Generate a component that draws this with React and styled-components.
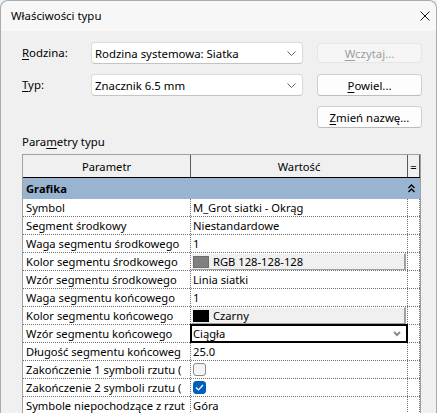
import React from "react";
import styled, { createGlobalStyle } from "styled-components";

const GlobalStyle = createGlobalStyle`
  html, body { margin: 0; padding: 0; background: #f0f0f0; }
  body { font-family: "Noto Sans", "Open Sans", sans-serif; }
  * { box-sizing: border-box; }
`;

const COLS = "168px 217px 12px";

const Window = styled.div`
  width: 437px;
  height: 413px;
  overflow: hidden;
  background: #f0f0f0;
  border: 1px solid #ababab;
  border-bottom: none;
  border-radius: 8px 8px 0 0;
  display: flex;
  flex-direction: column;
  font-family: "Noto Sans", "Open Sans", sans-serif;
  font-size: 11.4px;
  color: #000;
`;

const TitleBar = styled.div`
  height: 30px;
  flex: none;
  display: flex;
  align-items: center;
  justify-content: space-between;
  padding: 0 6px 0 10px;
  background: #f7f7f7;
  border-radius: 8px 8px 0 0;
`;

const Title = styled.span`
  line-height: 16px;
`;

const Body = styled.div`
  flex: 1;
  display: flex;
  flex-direction: column;
  padding: 11px 0 0 21px;
  min-height: 0;
`;

const FormGrid = styled.div`
  display: grid;
  grid-template-columns: 55px 212px 105px;
  grid-template-rows: 22px 22px 22px;
  column-gap: 14px;
  row-gap: 10px;
  align-items: center;
`;

const Label = styled.span`
  line-height: 16px;
  white-space: nowrap;
`;

const Key = styled.span`
  text-decoration: underline;
  text-underline-offset: 2px;
`;

const Combo = styled.div`
  height: 22px;
  background: #fff;
  border: 1px solid #dadada;
  border-bottom-color: #c4c4c4;
  border-radius: 4px;
  display: flex;
  align-items: center;
  justify-content: space-between;
  padding: 0 6px 0 3px;
  white-space: nowrap;
`;

const Button = styled.div`
  grid-column: 3;
  height: ${(p) => (p.disabled ? "20px" : "22px")};
  background: ${(p) => (p.disabled ? "#f5f5f5" : "#fdfdfd")};
  color: ${(p) => (p.disabled ? "#9e9e9e" : "#000")};
  border: 1px solid ${(p) => (p.disabled ? "#e6e6e6" : "#d0d0d0")};
  border-bottom-color: ${(p) => (p.disabled ? "#e6e6e6" : "#bcbcbc")};
  border-radius: 4px;
  display: flex;
  align-items: center;
  justify-content: center;
  white-space: nowrap;
`;

const SectionLabel = styled.div`
  margin-top: 6px;
  line-height: 16px;
`;

const Table = styled.div`
  margin-top: 4px;
  width: 399px;
  flex: 1;
  background: #fff;
  border: 1px solid #a0a0a0;
  border-bottom: none;
  display: flex;
  flex-direction: column;
  font-size: 11.2px;
`;

const HeaderRow = styled.div`
  display: grid;
  grid-template-columns: ${COLS};
  height: 23px;
  flex: none;
  background: #f0f0f0;
  border-bottom: 1px solid #000;
`;

const HeaderCell = styled.div`
  display: flex;
  align-items: center;
  justify-content: center;
  border-right: 1px solid #5a5a5a;
`;

const GroupRow = styled.div`
  height: 21px;
  flex: none;
  background: #99b4d1;
  display: flex;
  align-items: center;
  justify-content: space-between;
  padding: 0 5px 0 3px;
  font-weight: 700;
`;

const DataRow = styled.div`
  display: grid;
  grid-template-columns: ${COLS};
  height: 18px;
  flex: none;
  border-bottom: 1px dotted #6f6f6f;
`;

const Cell = styled.div`
  border-right: 1px dotted #6f6f6f;
  padding-left: ${(p) => (p.$pad != null ? p.$pad : 3)}px;
  overflow: visible;
  white-space: nowrap;
  display: flex;
  align-items: center;
  line-height: 17px;
  min-width: 0;
`;

const ClipText = styled.span`
  overflow: hidden;
  display: block;
  width: 100%;
`;

const ColorButton = styled.div`
  flex: 1;
  height: 17px;
  margin-right: 1px;
  background: #f0f0f0;
  border-top: 1px solid #fff;
  border-left: 1px solid #fff;
  border-right: 2px solid #a0a0a0;
  border-bottom: 1px solid #a0a0a0;
  display: flex;
  align-items: center;
  padding-left: 1px;
  gap: 4px;
`;

const Swatch = styled.span`
  width: 16px;
  height: 12px;
  background: ${(p) => p.$color};
  border: 1px solid ${(p) => (p.$color === "#000000" ? "#000" : "#6e6e6e")};
  flex: none;
`;

const Select = styled.div`
  flex: 1;
  height: 17px;
  background: #fff;
  box-shadow: 0 0 0 1px #000, inset 0 0 0 1px #000;
  display: flex;
  align-items: center;
  justify-content: space-between;
  padding: 0 6px 0 2px;
`;

const CheckBox = styled.span`
  width: 13px;
  height: 13px;
  margin-left: 2px;
  border-radius: 3px;
  background: ${(p) => (p.$checked ? "#005fb8" : "#f4f4f4")};
  border: 1px solid ${(p) => (p.$checked ? "#005fb8" : "#8a8a8a")};
  display: flex;
  align-items: center;
  justify-content: center;
`;

const CloseIcon = () => (
  <svg width="10" height="10" viewBox="0 0 10 10">
    <path d="M0.5 0.5 L9.5 9.5 M9.5 0.5 L0.5 9.5" stroke="#1a1a1a" strokeWidth="1" fill="none" />
  </svg>
);

const ChevronDown = () => (
  <svg width="9" height="5" viewBox="0 0 9 5">
    <path d="M0.5 0.5 L4.5 4.5 L8.5 0.5" stroke="#606060" strokeWidth="1" fill="none" />
  </svg>
);

const SmallChevron = () => (
  <svg width="8" height="6" viewBox="0 0 8 6">
    <path d="M1 1 L4 4 L7 1" stroke="#8c8c8c" strokeWidth="2" fill="none" />
  </svg>
);

const DoubleUp = () => (
  <svg width="7" height="9" viewBox="0 0 7 9">
    <path d="M0.5 4 L3.5 1 L6.5 4 M0.5 8 L3.5 5 L6.5 8" stroke="#000" strokeWidth="1.3" fill="none" />
  </svg>
);

const CheckMark = () => (
  <svg width="9" height="7" viewBox="0 0 9 7">
    <path d="M1 3.5 L3.5 6 L8 1" stroke="#fff" strokeWidth="1.2" fill="none" />
  </svg>
);

const rows = [
  { name: "Symbol", value: "M_Grot siatki - Okrąg" },
  { name: "Segment środkowy", value: "Niestandardowe" },
  { name: "Waga segmentu środkowego", value: "1" },
  { name: "Kolor segmentu środkowego", kind: "color", color: "#808080", value: "RGB 128-128-128" },
  { name: "Wzór segmentu środkowego", value: "Linia siatki" },
  { name: "Waga segmentu końcowego", value: "1" },
  { name: "Kolor segmentu końcowego", kind: "color", color: "#000000", value: "Czarny" },
  { name: "Wzór segmentu końcowego", kind: "select", value: "Ciągła" },
  { name: "Długość segmentu końcoweg", value: "25.0" },
  { name: "Zakończenie 1 symboli rzutu (", kind: "check", checked: false },
  { name: "Zakończenie 2 symboli rzutu (", kind: "check", checked: true },
  { name: "Symbole niepochodzące z rzut", value: "Góra" },
];

function Value({ row }) {
  if (row.kind === "color") {
    return (
      <Cell $pad={0}>
        <ColorButton>
          <Swatch $color={row.color} />
          <span>{row.value}</span>
        </ColorButton>
      </Cell>
    );
  }
  if (row.kind === "select") {
    return (
      <Cell $pad={0}>
        <Select>
          <span>{row.value}</span>
          <SmallChevron />
        </Select>
      </Cell>
    );
  }
  if (row.kind === "check") {
    return (
      <Cell $pad={0}>
        <CheckBox $checked={row.checked}>{row.checked && <CheckMark />}</CheckBox>
      </Cell>
    );
  }
  return (
    <Cell $pad={2}>
      <ClipText>{row.value}</ClipText>
    </Cell>
  );
}

export default function App() {
  return (
    <>
      <GlobalStyle />
      <Window>
        <TitleBar>
          <Title>Właściwości typu</Title>
          <CloseIcon />
        </TitleBar>
        <Body>
          <FormGrid>
            <Label>
              <Key>R</Key>odzina:
            </Label>
            <Combo>
              <span>Rodzina systemowa: Siatka</span>
              <ChevronDown />
            </Combo>
            <Button disabled>
              <span>
                <Key>W</Key>czytaj...
              </span>
            </Button>
            <Label>
              <Key>T</Key>yp:
            </Label>
            <Combo>
              <span>Znacznik 6.5 mm</span>
              <ChevronDown />
            </Combo>
            <Button>
              <span>
                <Key>P</Key>owiel...
              </span>
            </Button>
            <Button>
              <span>
                <Key>Z</Key>mień nazwę...
              </span>
            </Button>
          </FormGrid>
          <SectionLabel>
            Para<Key>m</Key>etry typu
          </SectionLabel>
          <Table>
            <HeaderRow>
              <HeaderCell>Parametr</HeaderCell>
              <HeaderCell>Wartość</HeaderCell>
              <HeaderCell>=</HeaderCell>
            </HeaderRow>
            <GroupRow>
              <span>Grafika</span>
              <DoubleUp />
            </GroupRow>
            {rows.map((r) => (
              <DataRow key={r.name}>
                <Cell>
                  <ClipText>{r.name}</ClipText>
                </Cell>
                <Value row={r} />
                <Cell />
              </DataRow>
            ))}
          </Table>
        </Body>
      </Window>
    </>
  );
}
